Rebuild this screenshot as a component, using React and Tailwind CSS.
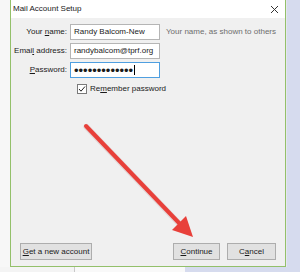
import React from 'react';

function Field({ label, access, children }) {
  const i = label.indexOf(access);
  return (
    <div className="flex items-center h-[16px]">
      <div className="w-[59px] pr-[3px] text-right text-[#1a1a1a]">
        {label.slice(0, i)}
        <span className="underline">{access}</span>
        {label.slice(i + 1)}
      </div>
      {children}
    </div>
  );
}

function Button({ pre, access, post, className }) {
  return (
    <div
      className={`h-[17px] flex items-center justify-center whitespace-nowrap bg-[#e1e1e1] border border-[#adadad] text-[#1a1a1a] ${className}`}
    >
      {pre}
      <span className="underline">{access}</span>
      {post}
    </div>
  );
}

export default function App() {
  return (
    <div
      className="relative w-[300px] h-[272px] overflow-hidden bg-[#f6f6f6] text-[8px] leading-none"
      style={{ fontFamily: '"Liberation Sans", Arial, sans-serif' }}
    >
      <div className="flex h-[267px]">
        <div className="w-[10px] bg-[#f7f7f7]" />
        <div className="w-[276px] flex flex-col border-x border-b border-[#93c06a] bg-[#f0f0f0]">
          <div className="h-[18px] bg-white flex items-center justify-between pl-[2px] pr-[6px] text-[#1a1a1a]">
            <span>Mail Account Setup</span>
            <svg width="9" height="9" viewBox="0 0 9 9">
              <path d="M1 1 L8 8 M8 1 L1 8" stroke="#333" strokeWidth="1" />
            </svg>
          </div>
          <div className="flex flex-col gap-[3px] pt-[6px]">
            <Field label="Your name:" access="n">
              <div className="w-[90px] h-[16px] bg-white border border-[#b5b5b5] flex items-center px-[3px] text-[#1a1a1a]">
                Randy Balcom-New
              </div>
              <span className="ml-[6px] text-[#6d6d6d]">Your name, as shown to others</span>
            </Field>
            <Field label="Email address:" access="l">
              <div className="w-[90px] h-[16px] bg-white border border-[#b5b5b5] flex items-center px-[3px] text-[#1a1a1a] whitespace-nowrap overflow-hidden">
                randybalcom@tprf.org
              </div>
            </Field>
            <Field label="Password:" access="P">
              <div className="w-[90px] h-[16px] bg-white border border-[#4f9fe0] flex items-center px-[3px] text-[#1a1a1a] text-[13px] overflow-hidden">
                •••••••••••••
                <span className="ml-[1px] w-px h-[10px] bg-black" />
              </div>
            </Field>
          </div>
          <div className="flex items-center mt-[5px] ml-[66px] h-[11px]">
            <div className="w-[10px] h-[10px] bg-white border border-[#7a7a7a] flex items-center justify-center">
              <svg width="8" height="8" viewBox="0 0 8 8">
                <path d="M1 4 L3 6.2 L7 1.5" stroke="#222" strokeWidth="1" fill="none" />
              </svg>
            </div>
            <span className="ml-[3px] text-[#1a1a1a]">
              Re<span className="underline">m</span>ember password
            </span>
          </div>
          <div className="flex-1" />
          <div className="flex items-center pl-[9px] pr-[9px] pb-[6px]">
            <Button access="G" post="et a new account" className="w-[72px]" />
            <div className="flex-1" />
            <Button access="C" post="ontinue" className="w-[47px]" />
            <Button pre="C" access="a" post="ncel" className="w-[49px] ml-[7px]" />
          </div>
        </div>
        <div className="flex-1 bg-[#d6dbee] border-l border-[#e4e6ef]" />
      </div>
      <div className="flex h-[5px]">
        <div className="w-[75px] bg-[#f4f4f4] border-r border-[#c9c9c9]" />
        <div className="w-[110px] bg-[#f9f9f9]" />
        <div className="flex-1 bg-[#d6dbee]" />
      </div>
      <svg className="absolute left-0 top-0 pointer-events-none" width="300" height="272" viewBox="0 0 300 272">
        <line x1="86" y1="126" x2="180" y2="224" stroke="#c9a8a8" strokeOpacity="0.35" strokeWidth="6" strokeLinecap="round" transform="translate(0.5 1)" />
        <line x1="86" y1="126" x2="180" y2="224" stroke="#e8403a" strokeWidth="4" strokeLinecap="round" />
        <polygon points="193,237 186,216 172,230" fill="#e8403a" />
      </svg>
    </div>
  );
}
